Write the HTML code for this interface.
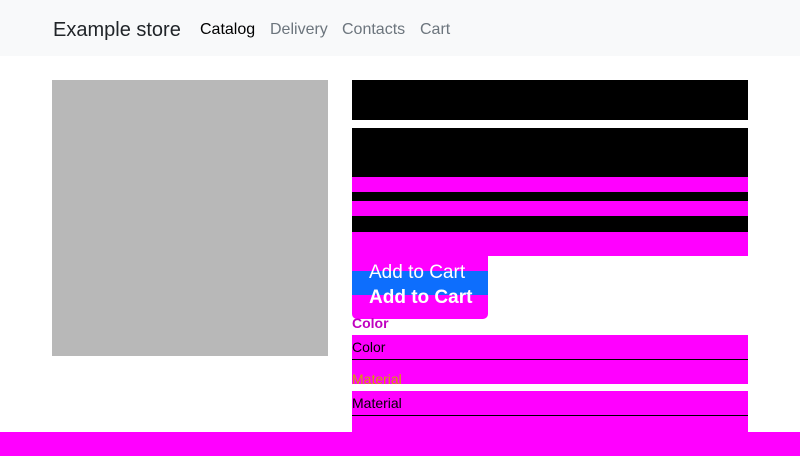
<!DOCTYPE html>
<html><head><meta charset="utf-8"><style>
*{margin:0;padding:0;box-sizing:border-box}
body{width:800px;height:456px;overflow:hidden;background:#fff;font-family:"Liberation Sans",sans-serif;position:relative}
.a{position:absolute}
.m{background:#ff00ff}
.k{background:#000}
nav{position:absolute;left:0;top:0;width:800px;height:56px;background:#f8f9fa}
nav span{position:absolute;top:21px;font-size:16px;color:#6c757d}
</style></head><body>
<nav>
<span style="left:53px;top:19px;font-size:20px;color:#212529">Example store</span>
<span style="left:200px;color:#000">Catalog</span>
<span style="left:270px">Delivery</span>
<span style="left:342px">Contacts</span>
<span style="left:420px">Cart</span>
</nav>
<div class="a" style="left:52px;top:80px;width:276px;height:276px;background:#b8b8b8"></div>
<div class="a k" style="left:352px;top:80px;width:396px;height:40px"></div>
<div class="a k" style="left:352px;top:128px;width:396px;height:49px"></div>
<div class="a m" style="left:352px;top:177px;width:396px;height:15px"></div>
<div class="a k" style="left:352px;top:192px;width:396px;height:9px"></div>
<div class="a m" style="left:352px;top:201px;width:396px;height:15px"></div>
<div class="a k" style="left:352px;top:216px;width:396px;height:16px"></div>
<div class="a m" style="left:352px;top:232px;width:396px;height:24px"></div>
<div class="a m" style="left:352px;top:247px;width:136px;height:72px;border-radius:5px"></div>
<div class="a" style="left:352px;top:271px;width:136px;height:24px;background:#0d6efd"></div>
<div class="a" style="left:369px;top:287px;font-size:19px;color:#fff;font-weight:bold">Add to Cart</div>
<div class="a" style="left:369px;top:262px;font-size:19px;color:#fff">Add to Cart</div>
<div class="a" style="left:352px;top:315px;font-size:14px;color:#c000c0;font-weight:bold">Color</div>
<div class="a m" style="left:352px;top:335px;width:396px;height:49px"></div>
<div class="a k" style="left:352px;top:359px;width:396px;height:1px"></div>
<div class="a" style="left:352px;top:339px;font-size:14px;color:#000">Color</div>
<div class="a" style="left:352px;top:371px;font-size:14px;color:#d0a000">Material</div>
<div class="a m" style="left:352px;top:391px;width:396px;height:45px"></div>
<div class="a k" style="left:352px;top:415px;width:396px;height:1px"></div>
<div class="a" style="left:352px;top:395px;font-size:14px;color:#000">Material</div>
<div class="a m" style="left:0;top:432px;width:800px;height:24px"></div>
</body></html>
